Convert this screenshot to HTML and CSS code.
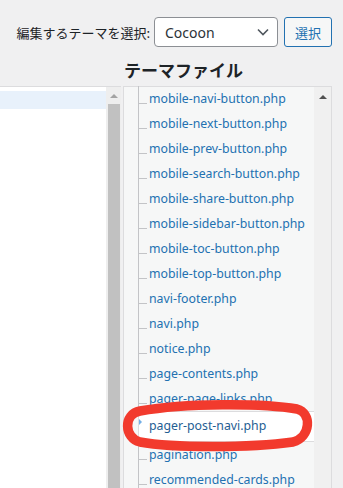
FILE: index.html
```html
<!DOCTYPE html>
<html lang="ja">
<head>
    <meta charset="UTF-8">
    <meta name="viewport" content="width=device-width, initial-scale=1.0">
    <title>テーマファイルエディター</title>
    <link rel="stylesheet" href="styles.css">
</head>
<body>
    <div class="toolbar">
        <label class="themeLabel" for="theme">編集するテーマを選択:</label>
        <div class="themeSelect">
            <span>Cocoon</span>
            <svg width="12" height="8" viewBox="0 0 12 8"><path d="M1 1.5 6 6.5 11 1.5" fill="none" stroke="#50575e" stroke-width="1.6"/></svg>
        </div>
        <button class="selectBtn">選択</button>
    </div>

    <h2 class="filesTitle">テーマファイル</h2>

    <div class="editor">
        <div class="codePane">
            <div class="codeArea">
                <div class="activeLine"></div>
            </div>
            <div class="scrollbar grayBar">
                <span class="arrow"></span>
                <div class="thumb"></div>
            </div>
        </div>

        <div class="fileList">
            <ul class="tree">
                <li><a href="javascript:;">mobile-navi-button.php</a></li>
                <li><a href="javascript:;">mobile-next-button.php</a></li>
                <li><a href="javascript:;">mobile-prev-button.php</a></li>
                <li><a href="javascript:;">mobile-search-button.php</a></li>
                <li><a href="javascript:;">mobile-share-button.php</a></li>
                <li><a href="javascript:;">mobile-sidebar-button.php</a></li>
                <li><a href="javascript:;">mobile-toc-button.php</a></li>
                <li><a href="javascript:;">mobile-top-button.php</a></li>
                <li><a href="javascript:;">navi-footer.php</a></li>
                <li><a href="javascript:;">navi.php</a></li>
                <li><a href="javascript:;">notice.php</a></li>
                <li><a href="javascript:;">page-contents.php</a></li>
                <li><a href="javascript:;">pager-page-links.php</a></li>
                <li class="current"><a href="javascript:;">pager-post-navi.php</a></li>
                <li><a href="javascript:;">pagination.php</a></li>
                <li><a href="javascript:;">recommended-cards.php</a></li>
            </ul>
            <div class="scrollbar">
                <span class="arrow dark"></span>
            </div>
        </div>
    </div>

    <!-- 手書きの赤い囲み -->
    <svg class="mark" width="343" height="488" viewBox="0 0 343 488">
        <path d="M140 411 C185 403 262 403 297 409 C312 413 311 437 293 442 C250 448 172 448 140 442 C124 438 123 414 140 411 Z" fill="none" stroke="#f23a2d" stroke-width="9.5" stroke-linejoin="round"/>
    </svg>
</body>
</html>
```

FILE: styles.css
```css
*{
    margin: 0;
    padding: 0;
    box-sizing: border-box;
}
body{
    position: relative;
    width: 343px;
    height: 488px;
    overflow: hidden;
    background: #f0f0f1;
    font-family: "Noto Sans", "Noto Sans CJK JP", sans-serif;
    color: #1d2327;
}
li{
    list-style: none;
}
a{
    text-decoration: none;
    color: #2271b1;
}
.toolbar{
    display: flex;
    justify-content: flex-end;
    align-items: center;
    height: 47px;
    padding: 17px 11px 0 0;
}
.themeLabel{
    font-family: "Noto Sans CJK JP", sans-serif;
    font-size: 13px;
    margin-right: 4px;
}
.themeSelect{
    display: flex;
    align-items: center;
    justify-content: space-between;
    width: 124px;
    height: 30px;
    padding: 0 8px 0 10px;
    background: #fff;
    border: 1px solid #8c8f94;
    border-radius: 4px;
    font-size: 14px;
    color: #2c3338;
}
.selectBtn{
    width: 48px;
    height: 30px;
    margin-left: 6px;
    background: #f6f7f7;
    border: 1px solid #2271b1;
    border-radius: 3px;
    color: #2271b1;
    font-family: "Noto Sans CJK JP", sans-serif;
    font-size: 13px;
}
.filesTitle{
    margin-top: 11px;
    padding-left: 124px;
    height: 28px;
    font-family: "Noto Sans CJK JP", sans-serif;
    font-size: 17px;
    line-height: 24px;
    font-weight: bold;
    color: #1d2327;
}
.editor{
    display: flex;
    height: 402px;
}
.codePane{
    display: flex;
    width: 121px;
    border-top: 1px solid #dcdcde;
}
.codeArea{
    width: 106px;
    background: #fff;
    padding-top: 4px;
}
.activeLine{
    height: 18px;
    background: #e8f1fb;
}
.scrollbar{
    position: relative;
    width: 17px;
    background: #f0f0f0;
}
.grayBar{
    width: 15px;
    background: #eeeeee;
}
.arrow{
    position: absolute;
    top: 7px;
    left: 4px;
    border-left: 4px solid transparent;
    border-right: 4px solid transparent;
    border-bottom: 4px solid #a3a3a3;
}
.arrow.dark{
    left: 5px;
    top: 8px;
    border-bottom-color: #505050;
}
.thumb{
    margin: 17px 1px 0 2px;
    height: 390px;
    background: #c1c1c1;
}
.fileList{
    display: flex;
    width: 209px;
    margin-left: 2px;
    background: #f6f7f7;
    border: 1px solid #dcdcde;
    border-bottom: none;
}
.tree{
    flex: 1;
    margin-left: 14px;
    margin-top: -1px;
    border-left: 1px solid #c3c4c7;
    font-size: 12.3px;
}
.tree li{
    display: flex;
    align-items: center;
    height: 25px;
    white-space: nowrap;
}
.tree li:before{
    content: "";
    width: 8px;
    height: 1px;
    margin: 10px 2px 0 0;
    background: #c3c4c7;
}
.tree li.current{
    position: relative;
    height: 31px;
    margin-left: -1px;
    padding: 0 0 3px 10px;
    background: #fff;
    border: 1px solid #dcdcde;
    border-right: none;
}
.tree li.current:before{
    position: absolute;
    left: 0;
    top: 7px;
    width: 0;
    height: 0;
    margin: 0;
    background: none;
    border-top: 3px solid transparent;
    border-bottom: 3px solid transparent;
    border-left: 3px solid #72aee6;
}
.tree li.current a{
    color: #1f5e93;
}
.mark{
    position: absolute;
    top: 0;
    left: 0;
    pointer-events: none;
}
```
